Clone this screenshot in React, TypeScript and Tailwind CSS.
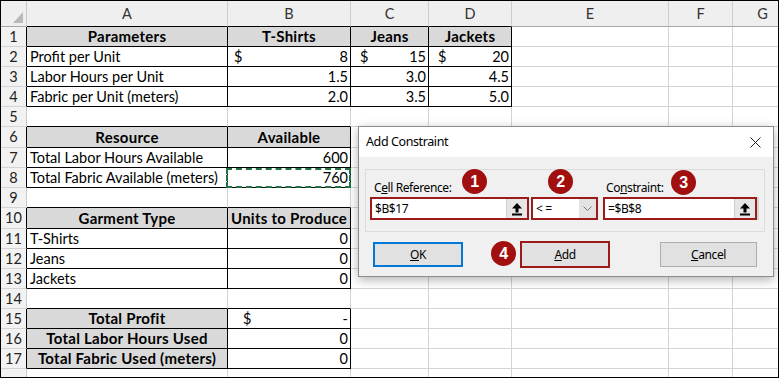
import React from 'react';

type Cell = {
  t?: string;
  kind?: 'text' | 'head' | 'num' | 'acct';
  ants?: boolean;
  pad?: string;
};

// column widths incl. right border: row header, A..G
const colCls = [
  'w-[26px]',
  'w-[201px]',
  'w-[123px]',
  'w-[78px]',
  'w-[83px]',
  'w-[157px]',
  'w-[64px]',
  'w-[60px]',
];
const letters = ['A', 'B', 'C', 'D', 'E', 'F', 'G'];

const rows = Array.from({ length: 18 }, (_, i) => i + 1);
const rowCls = (r: number) => (r === 6 || r === 10 ? 'h-[21px]' : r === 18 ? 'h-[10px]' : 'h-[20px]');

// [rowFrom, rowTo, colFrom, colTo]
const tables = [
  [1, 4, 1, 4],
  [6, 8, 1, 2],
  [10, 13, 1, 2],
  [15, 17, 1, 2],
];
const inTable = (r: number, c: number) =>
  tables.some(([r0, r1, c0, c1]) => r >= r0 && r <= r1 && c >= c0 && c <= c1);

const fills = new Set(['1-1', '1-2', '1-3', '1-4', '6-1', '6-2', '10-1', '10-2', '15-1', '16-1', '17-1']);

const data: Record<string, Cell> = {
  '1-1': { t: 'Parameters', kind: 'head' },
  '1-2': { t: 'T-Shirts', kind: 'head' },
  '1-3': { t: 'Jeans', kind: 'head' },
  '1-4': { t: 'Jackets', kind: 'head' },
  '2-1': { t: 'Profit per Unit' },
  '2-2': { t: '8', kind: 'acct', pad: 'pl-[6px]' },
  '2-3': { t: '15', kind: 'acct', pad: 'pl-[9px]' },
  '2-4': { t: '20', kind: 'acct', pad: 'pl-[9px]' },
  '3-1': { t: 'Labor Hours per Unit' },
  '3-2': { t: '1.5', kind: 'num' },
  '3-3': { t: '3.0', kind: 'num' },
  '3-4': { t: '4.5', kind: 'num' },
  '4-1': { t: 'Fabric per Unit (meters)' },
  '4-2': { t: '2.0', kind: 'num' },
  '4-3': { t: '3.5', kind: 'num' },
  '4-4': { t: '5.0', kind: 'num' },
  '6-1': { t: 'Resource', kind: 'head' },
  '6-2': { t: 'Available', kind: 'head' },
  '7-1': { t: 'Total Labor Hours Available' },
  '7-2': { t: '600', kind: 'num' },
  '8-1': { t: 'Total Fabric Available (meters)' },
  '8-2': { t: '760', kind: 'num', ants: true },
  '10-1': { t: 'Garment Type', kind: 'head' },
  '10-2': { t: 'Units to Produce', kind: 'head' },
  '11-1': { t: 'T-Shirts' },
  '11-2': { t: '0', kind: 'num' },
  '12-1': { t: 'Jeans' },
  '12-2': { t: '0', kind: 'num' },
  '13-1': { t: 'Jackets' },
  '13-2': { t: '0', kind: 'num' },
  '15-1': { t: 'Total Profit', kind: 'head' },
  '15-2': { t: '-', kind: 'acct', pad: 'pl-[15px]' },
  '16-1': { t: 'Total Labor Hours Used', kind: 'head' },
  '16-2': { t: '0', kind: 'num' },
  '17-1': { t: 'Total Fabric Used (meters)', kind: 'head' },
  '17-2': { t: '0', kind: 'num' },
};

const GridCell = ({ r, c }: { r: number; c: number }) => {
  const cell = data[`${r}-${c}`];
  const rightBlack = inTable(r, c) || inTable(r, c + 1);
  const bottomBlack = inTable(r, c) || inTable(r + 1, c);
  const fill = fills.has(`${r}-${c}`) ? 'bg-[#d9d9d9]' : 'bg-white';
  return (
    <div
      className={`${colCls[c]} shrink-0 relative flex items-center border-r border-b ${fill} ${
        rightBlack ? 'border-r-black' : 'border-r-[#d4d4d4]'
      } ${bottomBlack ? 'border-b-black' : 'border-b-[#d4d4d4]'}`}
    >
      {cell?.kind === 'head' && (
        <span className="w-full text-center font-bold text-[15px] tracking-[0.25px] whitespace-nowrap">{cell.t}</span>
      )}
      {cell?.kind === 'num' && <span className="w-full text-right pr-[2px]">{cell.t}</span>}
      {cell?.kind === 'acct' && (
        <span className={`w-full flex justify-between ${cell.pad} pr-[2px]`}>
          <span>$</span>
          <span>{cell.t}</span>
        </span>
      )}
      {cell && !cell.kind && <span className="pl-[3px] whitespace-nowrap">{cell.t}</span>}
      {cell?.ants && (
        <div className="absolute -left-[2px] -right-[1px] top-0 -bottom-[1px] border-2 border-dashed border-[#217346]" />
      )}
    </div>
  );
};

const UploadIcon = () => (
  <svg width="12" height="14" viewBox="0 0 12 14">
    <path d="M6 1 L1 6.5 H4.5 V10.5 H7.5 V6.5 H11 Z" fill="#000" />
    <rect x="1" y="11.5" width="10" height="2" fill="#000" />
  </svg>
);

const RefButton = () => (
  <div className="w-[21px] h-full bg-[#e6e6e6] border-l border-[#cfcfcf] flex items-center justify-center">
    <UploadIcon />
  </div>
);

const Badge = ({ n, cls }: { n: number; cls: string }) => (
  <div
    className={`absolute ${cls} w-[25px] h-[25px] rounded-full bg-[#a10f0f] text-white font-bold text-[16px] flex items-center justify-center font-['Liberation_Sans',sans-serif]`}
  >
    {n}
  </div>
);

export default function App() {
  return (
    <div className="w-[780px] h-[379px] bg-white">
      <div className="relative w-[779px] h-[378px] border border-black overflow-hidden bg-white font-['Lato',sans-serif] text-[14.5px] text-black">
        {/* column headers */}
        <div className="flex h-[26px]">
          <div className="w-[26px] shrink-0 bg-[#efefef] border-r border-b border-r-[#c8c8c8] border-b-[#a6a6a6] relative">
            <svg className="absolute right-[3px] bottom-[3px]" width="10" height="11" viewBox="0 0 10 11">
              <path d="M10 0 V11 H0 Z" fill="#b9b9b9" />
            </svg>
          </div>
          {letters.map((l, i) => (
            <div
              key={l}
              className={`${colCls[i + 1]} shrink-0 bg-[#efefef] border-r border-b border-r-[#cdcdcd] ${
                inTable(1, i + 1) ? 'border-b-black' : 'border-b-[#a6a6a6]'
              } flex items-center justify-center text-[#333]`}
            >
              {l}
            </div>
          ))}
        </div>
        {rows.map((r) => (
          <div key={r} className={`flex ${rowCls(r)}`}>
            <div
              className={`w-[26px] shrink-0 bg-[#f2f2f2] border-r border-b border-b-[#d4d4d4] ${
                inTable(r, 1) ? 'border-r-black' : 'border-r-[#c8c8c8]'
              } flex items-center justify-center text-[#222]`}
            >
              {r < 18 ? r : ''}
            </div>
            {letters.map((_, i) => (
              <GridCell key={i} r={r} c={i + 1} />
            ))}
          </div>
        ))}

        {/* Add Constraint dialog */}
        <div className="absolute left-[357px] top-[125px] w-[416px] h-[151px] border border-[#8c8c8c] bg-[#f0f0f0] shadow-[0_3px_10px_rgba(0,0,0,0.3)] font-['Noto_Sans',sans-serif] text-[12px] tracking-[-0.4px] text-black">
          <div className="h-[30px] bg-white flex items-center justify-between pl-[7px] pr-[12px]">
            <span className="text-[12.5px]">Add Constraint</span>
            <svg width="11" height="11" viewBox="0 0 11 11">
              <path d="M0.5 0.5 L10.5 10.5 M10.5 0.5 L0.5 10.5" stroke="#222" strokeWidth="1" />
            </svg>
          </div>
          <div className="ml-[6px] mt-[12px] w-[400px] h-[63px] border border-[#dcdcdc] pt-[9px] pl-[4px]">
            <div className="flex h-[18px] items-center">
              <span className="ml-[4px] w-[232px]">
                C<span className="underline">e</span>ll Reference:
              </span>
              <span>
                Co<span className="underline">n</span>straint:
              </span>
            </div>
            <div className="flex h-[23px]">
              <div className="w-[159px] h-full border-2 border-[#9b1a1a] bg-white flex items-center justify-between">
                <span className="pl-[3px]">$B$17</span>
                <RefButton />
              </div>
              <div className="ml-[2px] w-[67px] h-full border-2 border-[#9b1a1a] bg-white flex items-center justify-between">
                <span className="pl-[3px]">&lt; =</span>
                <div className="w-[17px] h-full bg-[#e3e3e3] flex items-center justify-center">
                  <svg width="9" height="6" viewBox="0 0 9 6">
                    <path d="M0.5 0.5 L4.5 4.5 L8.5 0.5" stroke="#777" fill="none" strokeWidth="1" />
                  </svg>
                </div>
              </div>
              <div className="ml-[5px] w-[154px] h-full border-2 border-[#9b1a1a] bg-white flex items-center justify-between">
                <span className="pl-[3px]">=$B$8</span>
                <RefButton />
              </div>
              <div className="w-[2px] h-full bg-[#d6d6d6]" />
            </div>
          </div>
          <div className="flex mt-[10px] ml-[14px] h-[25px]">
            <div className="w-[90px] h-full border-2 border-[#0078d7] bg-[#e1e1e1] flex items-center justify-center">
              <span>
                <span className="underline">O</span>K
              </span>
            </div>
            <div className="ml-[57px] w-[90px] h-[27px] -mt-[1px] border-2 border-[#9b1a1a] bg-[#e1e1e1] flex items-center justify-center">
              <span>
                <span className="underline">A</span>dd
              </span>
            </div>
            <div className="ml-[50px] w-[97px] h-full border border-[#adadad] bg-[#e1e1e1] flex items-center justify-center">
              <span>
                <span className="underline">C</span>ancel
              </span>
            </div>
          </div>

          <Badge n={1} cls="left-[103px] top-[42px]" />
          <Badge n={2} cls="left-[189px] top-[42px]" />
          <Badge n={3} cls="left-[312px] top-[43px]" />
          <Badge n={4} cls="left-[132px] top-[114px]" />
        </div>
      </div>
    </div>
  );
}
